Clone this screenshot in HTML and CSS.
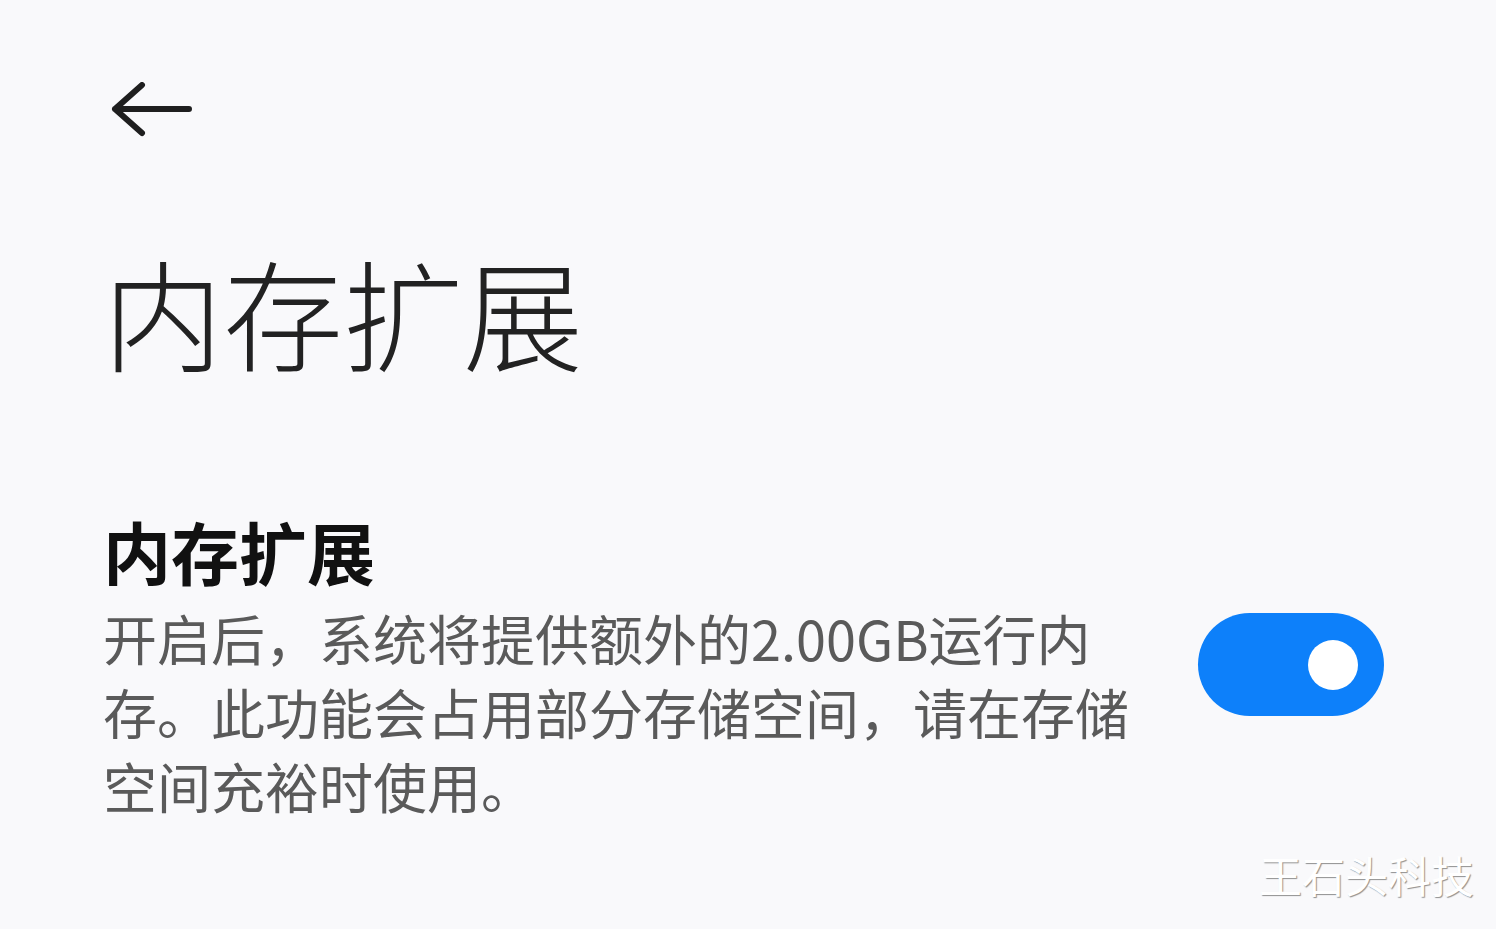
FILE: index.html
```html
<!DOCTYPE html>
<html lang="zh-CN">
<head>
<meta charset="UTF-8">
<meta name="viewport" content="width=device-width,initial-scale=1.0">
<title>内存扩展</title>
<link rel="stylesheet" href="styles.css">
</head>
<body>
<div class="page">
<div class="topbar">
<a class="back" href="#">
<svg width="84" height="56" viewBox="0 0 84 56"><path d="M80 27H6M33 3L6 27L33 51" fill="none" stroke="#1f1f1f" stroke-width="6" stroke-linecap="round" stroke-linejoin="round"/></svg>
</a>
</div>
<h1 class="title">内存扩展</h1>
<div class="setting">
<div class="setting-text">
<div class="setting-name">内存扩展</div>
<div class="setting-desc">开启后，系统将提供额外的2.00GB运行内存。此功能会占用部分存储空间，请在存储空间充裕时使用。</div>
</div>
<div class="switch on"><span class="knob"></span></div>
</div>
</div>
<div class="mark">王石头科技</div>
</body>
</html>
```
FILE: styles.css
```css
body{
margin:0;
background-color:#f9f9fb;
font-family:"Noto Sans CJK SC","Noto Sans",sans-serif;
width:1496px;
height:929px;
overflow:hidden;
position:relative;
}
.page{
padding:0 0 0 103px;
}
.topbar{
padding-top:82px;
height:58px;
}
.back{
display:inline-block;
margin-left:6px;
}
.title{
margin:0;
padding-top:101px;
font-size:120px;
font-weight:300;
line-height:140px;
color:#222;
}
.setting{
display:flex;
align-items:center;
margin-top:130px;
}
.setting-text{
width:1040px;
}
.setting-name{
font-size:68px;
font-weight:700;
line-height:80px;
margin-bottom:10px;
color:#111;
}
.setting-desc{
font-size:54px;
line-height:74px;
color:#5a5a5a;
}
.switch{
width:186px;
height:103px;
border-radius:52px;
background-color:#0d80fa;
margin-left:55px;
margin-bottom:5px;
display:flex;
align-items:center;
justify-content:flex-end;
box-sizing:border-box;
padding-right:26px;
}
.knob{
width:50px;
height:50px;
border-radius:50%;
background:#fff;
}
.mark{
position:absolute;
right:22px;
bottom:24px;
font-size:43px;
font-weight:400;
color:#fff;
text-shadow:1px 1px 1px #8f8f8f;
}
```
